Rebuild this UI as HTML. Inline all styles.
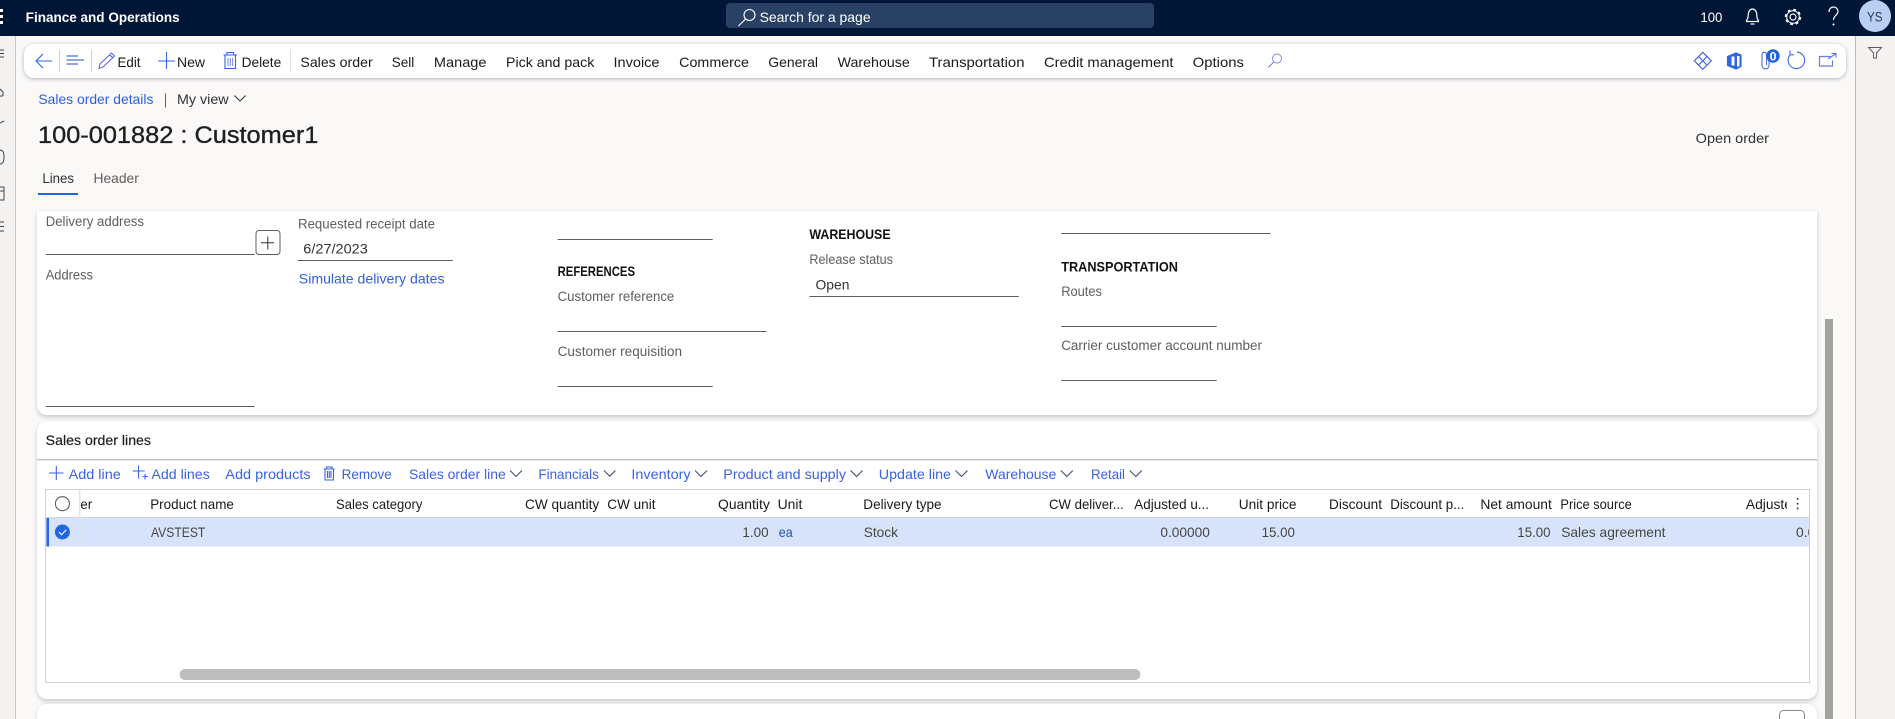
<!DOCTYPE html>
<html lang="en"><head><meta charset="utf-8"><title>Finance and Operations</title>
<style>
html,body{margin:0;padding:0;width:1895px;height:719px;overflow:hidden;background:#faf9f8}
body{position:relative}
.b{position:absolute}
svg{position:absolute;left:0;top:0}
text{font-family:"Liberation Sans",sans-serif;font-size:13px;fill:#323130}
.tb{font-size:14px;fill:#1b1a19}
.lb{font-size:13.5px;fill:#605e5c}
.h{font-size:14px;font-weight:bold;fill:#111}
.lk{font-size:14px;fill:#2f5fe0}
.ac{font-size:14px;fill:#3a63dc}
.th{font-size:14px;fill:#1b1a19}
.td{font-size:14px;fill:#484644}
.ln{stroke:#605e5c;stroke-width:1;fill:none}
.ic{stroke:#2f66e4;stroke-width:1.1;fill:none}
</style></head><body>
<div class="b" style="left:0;top:36px;width:15px;height:683px;background:#f3f2f1;border-right:1px solid #c8c6c4"></div>
<div class="b" style="left:1855px;top:36px;width:40px;height:683px;background:#f3f2f1;border-left:1px solid #bdbbb9"></div>
<div class="b" style="left:37px;top:211px;width:1780px;height:204px;background:#fff;border-radius:0 0 10px 10px;box-shadow:0 2px 5px rgba(0,0,0,.2)"></div>
<div class="b" style="left:37px;top:421px;width:1780px;height:278px;background:#fff;border-radius:10px;box-shadow:0 2px 5px rgba(0,0,0,.2)"></div>
<div class="b" style="left:37px;top:704px;width:1780px;height:15px;background:#fff;border-radius:10px 10px 0 0;box-shadow:0 1px 4px rgba(0,0,0,.15)"></div>
<div class="b" style="left:1825px;top:319px;width:8px;height:400px;background:#a3a3a1"></div>
<div class="b" style="left:24px;top:44px;width:1822px;height:34px;background:#fff;border-radius:10px;box-shadow:0 1px 4px rgba(0,0,0,.28)"></div>
<div class="b" style="left:0;top:0;width:1895px;height:36px;background:#001637"></div>
<div class="b" style="left:726px;top:3px;width:428px;height:25px;background:#2a4166;border-radius:4px"></div>

<svg width="1895" height="719" viewBox="0 0 1895 719" xmlns="http://www.w3.org/2000/svg">
<defs><clipPath id="c1"><rect x="1700" y="490" width="87" height="27"/></clipPath><clipPath id="c2"><rect x="1700" y="518" width="109" height="29"/></clipPath></defs>

<!-- top bar -->
<g fill="#fff"><rect x="0" y="9" width="3" height="3"/><rect x="0" y="15" width="3" height="3"/><rect x="0" y="21" width="3" height="3"/></g>
<text x="25.700" y="22" textLength="154" lengthAdjust="spacingAndGlyphs" style="font-weight:bold;fill:#fff;font-size:13.500px">Finance and Operations</text>
<g stroke="#fff" stroke-width="1.100" fill="none"><circle cx="749.500" cy="15" r="5.500"/><path d="M745.500 19l-7 7"/></g>
<text x="759.600" y="22" textLength="111" lengthAdjust="spacingAndGlyphs" style="fill:#fff;font-size:14px">Search for a page</text>
<text x="1700.400" y="22" textLength="22" lengthAdjust="spacingAndGlyphs" style="fill:#fff;font-size:14px">100</text>
<g stroke="#fff" stroke-width="1.200" fill="none">
<path d="M1746.500 21.500v-1c1.200-1.500 1.700-3 1.700-5.500 0-3.300 1.800-6 4.300-6s4.300 2.700 4.300 6c0 2.500.5 4 1.700 5.500v1z"/><path d="M1750.500 24h4"/>
<circle cx="1793" cy="17" r="3"/><circle cx="1793" cy="17" r="7" stroke-width="2.400" stroke-dasharray="2.700 2.800"/><circle cx="1793" cy="17" r="6.300" stroke-width="1"/>
<path d="M1829 12c0-3 2-5 4.500-5s4.500 2 4.500 4.500c0 3.500-4.500 4-4.500 8.500"/></g>
<circle cx="1833.500" cy="24.500" r="1" fill="#fff"/>
<circle cx="1875" cy="16" r="16" fill="#b9cff4"/>
<text x="1867" y="21.500" textLength="15.500" lengthAdjust="spacingAndGlyphs" style="fill:#263f66;font-size:14px">YS</text>

<!-- left rail icon fragments -->
<g stroke="#444" stroke-width="1" fill="none">
<path d="M0 50h4M0 53.500h4M0 57h4"/><path d="M0 89l3 3v4M0 96h3"/><path d="M0 123l4-2"/>
<path d="M0 150c3 0 4 3.500 4 7s-1 7-4 7"/><path d="M0 187h4v13H0M0 191h4"/><path d="M0 222h4M0 226.500h4M0 231h4"/></g>

<!-- toolbar -->
<g class="ic"><path d="M52 61H36M43 54l-7 7 7 7" class="ic"/>
<path d="M66.500 56H78M66.500 60H84M66.500 64H78" stroke="#4a6fe0" stroke-width="1.300" fill="none"/>
<path d="M99 68.500l1-4.500L111.500 53l3 3-11.500 11z" fill="none" stroke="#6a68e0" stroke-width="1.100"/><path d="M110 55l3 3" class="ic"/>
<path d="M158 61h17M166.500 52v17" class="ic"/>
<path d="M223.500 55h13.500M227 55v-2.500h6.500V55M225 55v13.500h10.500V55" class="ic"/><path d="M228 58v8M230.300 58v8M232.500 58v8" stroke="#7f93e8" fill="none"/>
<circle cx="1277" cy="58.500" r="4.500" fill="none" stroke="#7a84e8" stroke-width=".9"/><path d="M1273.800 62l-5.500 5.500" fill="none" stroke="#5c78e8" stroke-width=".9"/>
</g>
<path d="M59.500 50v22M91.500 50v22" stroke="#d2d0ce" fill="none"/><path d="M290.500 50v22" stroke="#e1dfdd" fill="none"/>
<text class="tb" x="117.500" y="67" textLength="23" lengthAdjust="spacingAndGlyphs">Edit</text>
<text class="tb" x="177" y="67" textLength="28" lengthAdjust="spacingAndGlyphs">New</text>
<text class="tb" x="241.600" y="67" textLength="39.600" lengthAdjust="spacingAndGlyphs">Delete</text>
<text class="tb" x="300.400" y="67" textLength="72.300" lengthAdjust="spacingAndGlyphs">Sales order</text>
<text class="tb" x="391.800" y="67" textLength="22.500" lengthAdjust="spacingAndGlyphs">Sell</text>
<text class="tb" x="433.900" y="67" textLength="52.600" lengthAdjust="spacingAndGlyphs">Manage</text>
<text class="tb" x="506" y="67" textLength="88.300" lengthAdjust="spacingAndGlyphs">Pick and pack</text>
<text class="tb" x="613.500" y="67" textLength="46" lengthAdjust="spacingAndGlyphs">Invoice</text>
<text class="tb" x="679.200" y="67" textLength="69.800" lengthAdjust="spacingAndGlyphs">Commerce</text>
<text class="tb" x="768.200" y="67" textLength="49.800" lengthAdjust="spacingAndGlyphs">General</text>
<text class="tb" x="837.600" y="67" textLength="72.200" lengthAdjust="spacingAndGlyphs">Warehouse</text>
<text class="tb" x="929" y="67" textLength="95.500" lengthAdjust="spacingAndGlyphs">Transportation</text>
<text class="tb" x="1044" y="67" textLength="129.500" lengthAdjust="spacingAndGlyphs">Credit management</text>
<text class="tb" x="1192.700" y="67" textLength="51.300" lengthAdjust="spacingAndGlyphs">Options</text>

<!-- toolbar right icons -->
<g fill="none" stroke-width="1.150">
<path d="M1702.800 52.300l8.500 8.500-8.500 8.500-8.500-8.500z" stroke="#3f66e6"/><path d="M1698.500 56.500l8.600 8.600M1707.100 56.500l-8.600 8.600" stroke="#3f66e6"/>
<path d="M1727.500 56.500L1736 53l5 2v11.500l-5 2.500-8.500-3.500z" fill="#2f66e4" stroke="#2f66e4"/>
<rect x="1731.500" y="56.500" width="3" height="9" fill="#fff" stroke="none"/><rect x="1737" y="56" width="2.500" height="10.500" fill="#fff" stroke="none"/>
<path d="M1769 58v7.500c0 4.500-7 4.500-7 0V54.500c0-3 4.500-3 4.500 0V65" stroke="#5a6fe6"/>
<path d="M1797 52A8.300 8.300 0 1 1 1790.600 54.300M1790 50.500v4.300h4" stroke="#3f72e8"/>
<path d="M1831 56.500h-11.500v9.500h13v-5.500M1828 59l7.500-5M1831.500 53.500h4.500v4" stroke="#6a78e8"/>
</g>
<circle cx="1773" cy="56" r="6.700" fill="#1f63e0"/>
<text x="1769.700" y="60.500" textLength="6.800" lengthAdjust="spacingAndGlyphs" style="fill:#fff;font-weight:bold;font-size:12px">0</text>
<path d="M1868.500 47.500h13l-5 5.500v5l-3 0v-5z" stroke="#605e5c" stroke-width="1" fill="none"/>

<!-- page header -->
<text class="lk" x="38.400" y="104" textLength="115" lengthAdjust="spacingAndGlyphs">Sales order details</text>
<path d="M165.500 93.500v14" stroke="#605e5c" fill="none"/>
<text class="tb" x="177" y="104" textLength="51.600" lengthAdjust="spacingAndGlyphs" style="fill:#323130">My view</text>
<path d="M234.500 95.500l5.500 5.500 5.500-5.500" stroke="#323130" fill="none"/>
<text x="38" y="143" textLength="280.400" lengthAdjust="spacingAndGlyphs" style="font-size:24px;fill:#201f1e;stroke:#201f1e;stroke-width:.35">100-001882 : Customer1</text>
<text class="tb" x="1695.700" y="143" textLength="73.300" lengthAdjust="spacingAndGlyphs" style="fill:#323130">Open order</text>
<text class="tb" x="42.400" y="183" textLength="31.600" lengthAdjust="spacingAndGlyphs" style="fill:#323130">Lines</text>
<text class="tb" x="93.500" y="183" textLength="45.300" lengthAdjust="spacingAndGlyphs" style="fill:#605e5c">Header</text>
<rect x="38" y="193" width="40" height="2" fill="#2266e3"/>

<!-- form card -->
<text class="lb" x="45.700" y="226" textLength="98.300" lengthAdjust="spacingAndGlyphs">Delivery address</text>
<path class="ln" d="M45.700 254.500H254.700"/>
<rect x="256" y="230.500" width="24" height="24" rx="3" fill="#fff" stroke="#605e5c"/>
<path d="M261 242.700h13M267.800 236.500v13" stroke="#323130" fill="none"/>
<text class="lb" x="298" y="228.300" textLength="137" lengthAdjust="spacingAndGlyphs">Requested receipt date</text>
<text x="303.300" y="253.300" textLength="64.500" lengthAdjust="spacingAndGlyphs" style="font-size:14px">6/27/2023</text>
<path class="ln" d="M297.600 260.500H452.700"/>
<text class="lk" x="298.800" y="283.300" textLength="145.700" lengthAdjust="spacingAndGlyphs">Simulate delivery dates</text>
<text class="lb" x="45.700" y="279.300" textLength="47.300" lengthAdjust="spacingAndGlyphs">Address</text>
<path class="ln" d="M45.700 406.500H254.700"/>
<path class="ln" d="M557.600 239.500H712.700"/>
<text class="h" x="557.600" y="276" textLength="77.400" lengthAdjust="spacingAndGlyphs">REFERENCES</text>
<text class="lb" x="557.600" y="301" textLength="116.700" lengthAdjust="spacingAndGlyphs">Customer reference</text>
<path class="ln" d="M557.600 331.500H766.500"/>
<text class="lb" x="557.600" y="356" textLength="124.400" lengthAdjust="spacingAndGlyphs">Customer requisition</text>
<path class="ln" d="M557.600 386.500H712.700"/>
<text class="h" x="809.400" y="239" textLength="81.200" lengthAdjust="spacingAndGlyphs">WAREHOUSE</text>
<text class="lb" x="809.400" y="264" textLength="83.600" lengthAdjust="spacingAndGlyphs">Release status</text>
<text x="815.500" y="289.300" textLength="33.900" lengthAdjust="spacingAndGlyphs" style="font-size:14px">Open</text>
<path class="ln" d="M809.400 296.500H1018.800"/>
<path class="ln" d="M1061.200 233.500H1270.600"/>
<text class="h" x="1061.200" y="271.300" textLength="116.800" lengthAdjust="spacingAndGlyphs">TRANSPORTATION</text>
<text class="lb" x="1061.200" y="296" textLength="40.800" lengthAdjust="spacingAndGlyphs">Routes</text>
<path class="ln" d="M1061.200 326.500H1216.700"/>
<text class="lb" x="1061.200" y="350" textLength="200.800" lengthAdjust="spacingAndGlyphs">Carrier customer account number</text>
<path class="ln" d="M1061.200 380.500H1216.700"/>

<!-- lines card -->
<text x="45.700" y="445" textLength="105.300" lengthAdjust="spacingAndGlyphs" style="font-size:14px;fill:#201f1e;stroke:#201f1e;stroke-width:.2">Sales order lines</text>
<rect x="37" y="459" width="1780" height="1.500" fill="#c4c4c4"/>
<g fill="none" stroke="#3a63dc" stroke-width="1.100">
<path d="M49 473h14.500M56.300 466v14"/>
<path d="M132.700 471h12M138.500 465.500v13M142.500 476.500h5.500M145 474v5.500"/>
<path d="M323.700 469h11M326.500 469v-2h5.500v2M325 469v11h8.500v-11M327.500 471v7M329.300 471v7M331 471v7"/>
<path d="M510 470.500l6 6 6-6M604 470.500l5.700 5.700 5.700-5.700M695 470.500l6 6 6-6M850.600 470.500l6 6 6-6M955.500 470.500l6 6 6-6M1060.800 470.500l6 6 6-6M1129.800 470.500l6 6 6-6" stroke="#40507a"/>
</g>
<text class="ac" x="68.600" y="479" textLength="52.200" lengthAdjust="spacingAndGlyphs">Add line</text>
<text class="ac" x="151.400" y="479" textLength="58.400" lengthAdjust="spacingAndGlyphs">Add lines</text>
<text class="ac" x="225.300" y="479" textLength="85.300" lengthAdjust="spacingAndGlyphs">Add products</text>
<text class="ac" x="341.600" y="479" textLength="50.200" lengthAdjust="spacingAndGlyphs">Remove</text>
<text class="ac" x="409" y="479" textLength="96.700" lengthAdjust="spacingAndGlyphs">Sales order line</text>
<text class="ac" x="538.400" y="479" textLength="60.400" lengthAdjust="spacingAndGlyphs">Financials</text>
<text class="ac" x="631.400" y="479" textLength="59.200" lengthAdjust="spacingAndGlyphs">Inventory</text>
<text class="ac" x="723.300" y="479" textLength="122.700" lengthAdjust="spacingAndGlyphs">Product and supply</text>
<text class="ac" x="878.800" y="479" textLength="72.200" lengthAdjust="spacingAndGlyphs">Update line</text>
<text class="ac" x="985.300" y="479" textLength="71" lengthAdjust="spacingAndGlyphs">Warehouse</text>
<text class="ac" x="1091" y="479" textLength="34" lengthAdjust="spacingAndGlyphs">Retail</text>

<!-- grid -->
<rect x="45.500" y="489.500" width="1764" height="193" fill="#fff" stroke="#d0d0d0"/>
<rect x="46" y="517" width="1763" height="1" fill="#d4d4d4"/>
<rect x="46" y="518" width="1763" height="28.500" fill="#d7e3fa"/>
<rect x="46.500" y="518" width="2.500" height="28.500" fill="#2266e3"/>
<rect x="79" y="490" width="1.500" height="56.500" fill="#e4e4e4"/>
<circle cx="62.400" cy="503.700" r="7" fill="#fff" stroke="#605e5c" stroke-width="1.100"/>
<circle cx="62.400" cy="532" r="7.500" fill="#2266e3"/>
<path d="M59 532l2.500 2.700 4.800-5" stroke="#fff" stroke-width="1.100" fill="none"/>
<text class="th" x="80.400" y="509" textLength="11.800" lengthAdjust="spacingAndGlyphs">er</text>
<text class="th" x="150.200" y="509" textLength="83.700" lengthAdjust="spacingAndGlyphs">Product name</text>
<text class="th" x="336" y="509" textLength="86.400" lengthAdjust="spacingAndGlyphs">Sales category</text>
<text class="th" x="525" y="509" textLength="74.200" lengthAdjust="spacingAndGlyphs">CW quantity</text>
<text class="th" x="607.300" y="509" textLength="48.200" lengthAdjust="spacingAndGlyphs">CW unit</text>
<text class="th" x="718" y="509" textLength="51.800" lengthAdjust="spacingAndGlyphs">Quantity</text>
<text class="th" x="777.600" y="509" textLength="24.800" lengthAdjust="spacingAndGlyphs">Unit</text>
<text class="th" x="863.300" y="509" textLength="78.300" lengthAdjust="spacingAndGlyphs">Delivery type</text>
<text class="th" x="1049" y="509" textLength="74.700" lengthAdjust="spacingAndGlyphs">CW deliver...</text>
<text class="th" x="1134.300" y="509" textLength="74.700" lengthAdjust="spacingAndGlyphs">Adjusted u...</text>
<text class="th" x="1238.800" y="509" textLength="57.700" lengthAdjust="spacingAndGlyphs">Unit price</text>
<text class="th" x="1329" y="509" textLength="53" lengthAdjust="spacingAndGlyphs">Discount</text>
<text class="th" x="1390.200" y="509" textLength="74.100" lengthAdjust="spacingAndGlyphs">Discount p...</text>
<text class="th" x="1480.400" y="509" textLength="71.400" lengthAdjust="spacingAndGlyphs">Net amount</text>
<text class="th" x="1560.400" y="509" textLength="71.400" lengthAdjust="spacingAndGlyphs">Price source</text>
<g clip-path="url(#c1)"><text class="th" x="1745.900" y="509" textLength="46" lengthAdjust="spacingAndGlyphs">Adjuste</text></g>
<g fill="#444"><circle cx="1797.600" cy="499" r="1"/><circle cx="1797.600" cy="503.700" r="1"/><circle cx="1797.600" cy="508.400" r="1"/></g>
<text class="td" x="151" y="537" textLength="54.300" lengthAdjust="spacingAndGlyphs">AVSTEST</text>
<text class="td" x="742.400" y="537" textLength="26.200" lengthAdjust="spacingAndGlyphs">1.00</text>
<text class="td" x="778.800" y="537" textLength="13.900" lengthAdjust="spacingAndGlyphs" style="fill:#1f55b8">ea</text>
<text class="td" x="863.700" y="537" textLength="34.300" lengthAdjust="spacingAndGlyphs">Stock</text>
<text class="td" x="1160.400" y="537" textLength="49.400" lengthAdjust="spacingAndGlyphs">0.00000</text>
<text class="td" x="1261.600" y="537" textLength="33.400" lengthAdjust="spacingAndGlyphs">15.00</text>
<text class="td" x="1517.300" y="537" textLength="33.300" lengthAdjust="spacingAndGlyphs">15.00</text>
<text class="td" x="1561.200" y="537" textLength="104.300" lengthAdjust="spacingAndGlyphs">Sales agreement</text>
<g clip-path="url(#c2)"><text class="td" x="1796" y="537" textLength="27" lengthAdjust="spacingAndGlyphs">0.00</text></g>
<rect x="179.600" y="669" width="960.800" height="11" rx="5.500" fill="#bdbdbd"/>
<rect x="1779.500" y="710.500" width="25" height="20" rx="4" fill="#fff" stroke="#8a8886"/>
</svg>
</body></html>
